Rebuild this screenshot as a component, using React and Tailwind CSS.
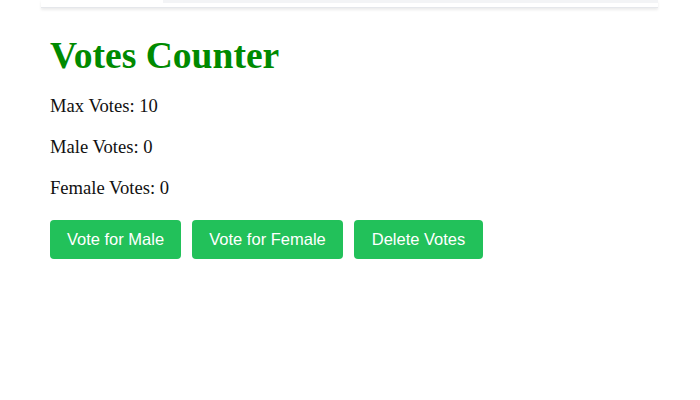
import React, { useState } from 'react';

const App = () => {
  const maxVotes = 10;
  const [male, setMale] = useState(0);
  const [female, setFemale] = useState(0);

  const voteMale = () => {
    if (male + female < maxVotes) setMale(male + 1);
  };
  const voteFemale = () => {
    if (male + female < maxVotes) setFemale(female + 1);
  };
  const deleteVotes = () => {
    setMale(0);
    setFemale(0);
  };

  return (
    <div className="bg-white min-h-screen w-[700px] h-[400px] overflow-hidden" style={{ fontFamily: '"Liberation Serif", serif' }}>
      <div className="ml-[41px] w-[617px] h-[8px] border-b border-gray-200 shadow-[0_2px_3px_rgba(0,0,0,0.08)] flex justify-end">
        <div className="w-[495px] h-[3px] bg-gray-100"></div>
      </div>
      <div className="pl-[50px] pt-[27px]">
        <h1 className="text-[37.6px] font-bold text-[#008a00] leading-[42px]">Votes Counter</h1>
        <p className="text-[18.6px] text-[#111] mt-[18px] leading-[22px]">Max Votes: {maxVotes}</p>
        <p className="text-[18.6px] text-[#111] mt-[19px] leading-[22px]">Male Votes: {male}</p>
        <p className="text-[18.6px] text-[#111] mt-[19px] leading-[22px]">Female Votes: {female}</p>
        <div className="flex gap-[11px] mt-[21px]" style={{ fontFamily: '"Liberation Sans", sans-serif' }}>
          <button onClick={voteMale} className="h-[39px] w-[131px] bg-[#22c15a] text-white text-[16.5px] rounded-[4px]">Vote for Male</button>
          <button onClick={voteFemale} className="h-[39px] w-[151px] bg-[#22c15a] text-white text-[16.5px] rounded-[4px]">Vote for Female</button>
          <button onClick={deleteVotes} className="h-[39px] w-[129px] bg-[#22c15a] text-white text-[16.5px] rounded-[4px]">Delete Votes</button>
        </div>
      </div>
    </div>
  );
};

export default App;
